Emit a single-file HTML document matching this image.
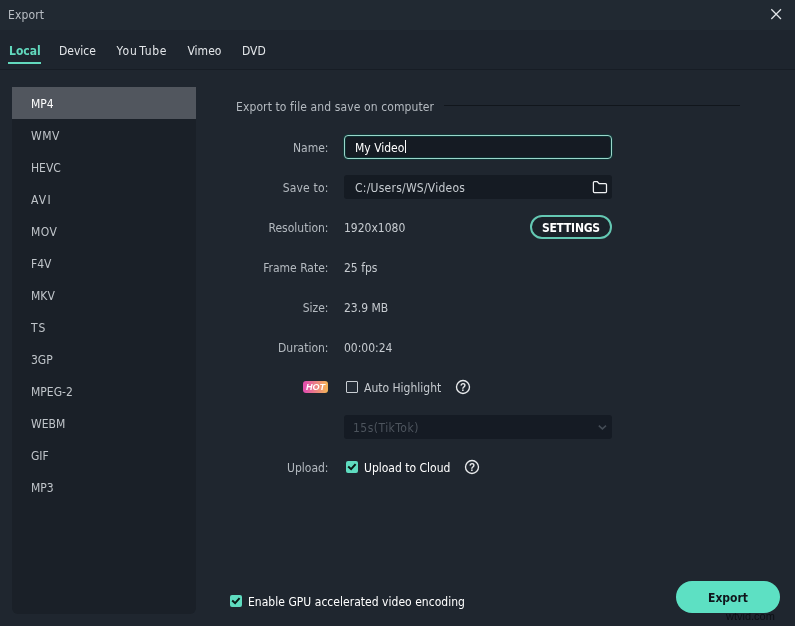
<!DOCTYPE html>
<html><head><meta charset="utf-8"><title>Export</title>
<style>
html,body{margin:0;padding:0;}
body{width:795px;height:626px;overflow:hidden;background:#1f262f;font-family:"DejaVu Sans Condensed","DejaVu Sans","Liberation Sans",sans-serif;font-size:12px;font-stretch:condensed;color:#c9ced3;position:relative;}
.abs{position:absolute;white-space:nowrap;}
#titlebar{left:0;top:0;width:795px;height:30px;background:#212932;}
#title{left:8px;top:8px;font-size:12px;color:#b9bec4;letter-spacing:0.15px;}
#tabs{left:0;top:30px;width:795px;height:39px;background:#1e252e;border-bottom:1px solid #171d25;}
.tab{top:44px;font-size:12px;color:#e4e7ea;}
#tab-local{color:#62d8bd;font-weight:bold;}
#underline{left:8px;top:62px;width:33px;height:2px;background:#62d8bd;}
#sidebar{left:12px;top:87px;width:184px;height:527px;background:#1a2028;border-radius:0 0 6px 6px;}
#sel{left:12px;top:87px;width:184px;height:32px;background:#51565e;}
.fmt{left:31px;font-size:12px;color:#c0c5ca;}
.lbl{right:466.5px;text-align:right;color:#b4bac0;}
.val{left:344px;color:#c6cbd0;}
.input{left:344px;width:268px;height:24px;background:#151b23;border-radius:3px;box-sizing:border-box;}
#wrap{position:absolute;left:0;top:0;width:795px;height:626px;will-change:transform;}
</style></head><body>
<div id="wrap">
<div class="abs" id="titlebar"></div>
<div class="abs" id="title">Export</div>
<svg class="abs" style="left:770px;top:8px" width="13" height="13" viewBox="0 0 13 13"><path d="M1.3 1.3 L11 11 M11 1.3 L1.3 11" stroke="#e2e5e8" stroke-width="1.25" fill="none"/></svg>
<div class="abs" id="tabs"></div>
<div class="abs tab" id="tab-local" style="left:9px">Local</div>
<div class="abs tab" style="left:59px">Device</div>
<div class="abs tab" style="left:116.5px"><span style="letter-spacing:0.9px">You</span><span style="letter-spacing:0.7px;margin-left:1.6px">Tube</span></div>
<div class="abs tab" style="left:187.5px">Vimeo</div>
<div class="abs tab" style="left:242px">DVD</div>
<div class="abs" id="underline"></div>

<div class="abs" id="sidebar"></div>
<div class="abs" id="sel"></div>
<div class="abs fmt" style="top:97px;color:#fff">MP4</div>
<div class="abs fmt" style="top:129px;letter-spacing:0.5px">WMV</div>
<div class="abs fmt" style="top:161px">HEVC</div>
<div class="abs fmt" style="top:193px;letter-spacing:1.2px">AVI</div>
<div class="abs fmt" style="top:225px;letter-spacing:0.5px">MOV</div>
<div class="abs fmt" style="top:257px">F4V</div>
<div class="abs fmt" style="top:289px">MKV</div>
<div class="abs fmt" style="top:321px;letter-spacing:0.8px">TS</div>
<div class="abs fmt" style="top:353px">3GP</div>
<div class="abs fmt" style="top:385px">MPEG-2</div>
<div class="abs fmt" style="top:417px">WEBM</div>
<div class="abs fmt" style="top:449px">GIF</div>
<div class="abs fmt" style="top:481px">MP3</div>

<div class="abs" style="left:236px;top:100px;color:#b4bac0;letter-spacing:0.11px">Export to file and save on computer</div>
<div class="abs" style="left:444px;top:105px;width:296px;height:1px;background:#11161c"></div>

<div class="abs lbl" style="top:141px">Name:</div>
<div class="abs input" style="top:135px;border:1px solid #9ad6ca;height:24px;border-radius:4px;box-shadow:0 0 0 1px rgba(10,66,62,.6),inset 0 0 0 1px rgba(10,66,62,.6)"></div>
<div class="abs" style="left:355px;top:141px;color:#fff">My Video</div>
<div class="abs" style="left:405px;top:140px;width:1px;height:13px;background:#fff"></div>

<div class="abs lbl" style="top:181px;letter-spacing:0.17px">Save to:</div>
<div class="abs input" style="top:175px;height:24px"></div>
<div class="abs" style="left:355px;top:181px;color:#c6cbd0;letter-spacing:0.25px">C:/Users/WS/Videos</div>
<svg class="abs" style="left:592px;top:180px" width="16" height="14" viewBox="0 0 16 14"><path d="M1.4 2.5 a1 1 0 0 1 1 -1 h2.7 l2.2 2.2 h6.2 a1 1 0 0 1 1 1 v6.9 a1 1 0 0 1 -1 1 h-11.1 a1 1 0 0 1 -1 -1 z" stroke="#f0f1f3" stroke-width="1.25" fill="none" stroke-linejoin="round"/></svg>

<div class="abs lbl" style="top:221px">Resolution:</div>
<div class="abs val" style="top:221px">1920x1080</div>
<div class="abs" style="left:530px;top:215px;width:82px;height:24px;box-sizing:border-box;border:2px solid #64c8b3;border-radius:12px;background:#1b222a;"></div>
<div class="abs" style="left:530px;top:221px;width:82px;text-align:center;color:#fff;font-weight:bold;font-size:12px;letter-spacing:-0.25px;text-indent:-0.25px">SETTINGS</div>

<div class="abs lbl" style="top:261px">Frame Rate:</div>
<div class="abs val" style="top:261px">25 fps</div>
<div class="abs lbl" style="top:301px">Size:</div>
<div class="abs val" style="top:301px">23.9 MB</div>
<div class="abs lbl" style="top:341px">Duration:</div>
<div class="abs val" style="top:341px">00:00:24</div>

<div class="abs" style="left:303px;top:381px;width:25px;height:12px;border-radius:3px;background:linear-gradient(90deg,#e352ac 10%,#f3b25a 95%);"></div>
<div class="abs" style="left:303px;top:381px;width:25px;height:12px;line-height:12px;text-align:center;color:#fff;font-weight:bold;font-style:italic;font-size:9px;font-family:'Liberation Sans',sans-serif">HOT</div>
<div class="abs" style="left:346px;top:381px;width:12px;height:12px;box-sizing:border-box;border:1px solid #c9ced3;border-radius:1px;background:#232b35"></div>
<div class="abs" style="left:364px;top:381px;color:#c6cbd0">Auto Highlight</div>
<svg class="abs" style="left:455px;top:379px" width="16" height="16" viewBox="0 0 16 16"><circle cx="8" cy="8" r="6.5" stroke="#e8eaec" stroke-width="1.35" fill="none"/><text x="8" y="11.6" text-anchor="middle" font-size="10" font-weight="bold" fill="#e8eaec" font-family="Liberation Sans, sans-serif">?</text></svg>

<div class="abs input" style="top:415px;height:24px;background:#151b24"></div>
<div class="abs" style="left:353px;top:421px;color:#4d545d;letter-spacing:0.47px">15s(TikTok)</div>
<svg class="abs" style="left:597px;top:423.5px" width="11" height="8" viewBox="0 0 11 8"><path d="M1.8 1.6 L5.4 4.9 L9 1.6" stroke="#444c56" stroke-width="1.5" fill="none"/></svg>

<div class="abs lbl" style="top:461px">Upload:</div>
<div class="abs" style="left:346px;top:461px;width:12px;height:12px;border-radius:2px;background:#5fdcc0"></div>
<svg class="abs" style="left:346px;top:461px" width="12" height="12" viewBox="0 0 12 12"><path d="M2.2 5.5 L5.1 8.2 L9.6 3.2" stroke="#0a1a16" stroke-width="2" fill="none"/></svg>
<div class="abs" style="left:364px;top:461px;color:#fff">Upload to Cloud</div>
<svg class="abs" style="left:464px;top:459px" width="16" height="16" viewBox="0 0 16 16"><circle cx="8" cy="8" r="6.5" stroke="#e8eaec" stroke-width="1.35" fill="none"/><text x="8" y="11.6" text-anchor="middle" font-size="10" font-weight="bold" fill="#e8eaec" font-family="Liberation Sans, sans-serif">?</text></svg>

<div class="abs" style="left:230px;top:595px;width:12px;height:12px;border-radius:2px;background:#5fdcc0"></div>
<svg class="abs" style="left:230px;top:595px" width="12" height="12" viewBox="0 0 12 12"><path d="M2.2 5.5 L5.1 8.2 L9.6 3.2" stroke="#0a1a16" stroke-width="2" fill="none"/></svg>
<div class="abs" style="left:248px;top:595px;color:#fff;letter-spacing:0.03px">Enable GPU accelerated video encoding</div>

<div class="abs" style="left:726px;top:609.5px;color:#0c1015;font-size:11px;line-height:12px;font-family:'Liberation Sans',sans-serif">wtvid.com</div>
<div class="abs" style="left:676px;top:581px;width:104px;height:32px;border-radius:16px;background:#5de0c3"></div>
<div class="abs" style="left:676px;top:591px;width:104px;text-align:center;color:#10161c;font-weight:bold;font-size:12px">Export</div>
</div>
</body></html>
